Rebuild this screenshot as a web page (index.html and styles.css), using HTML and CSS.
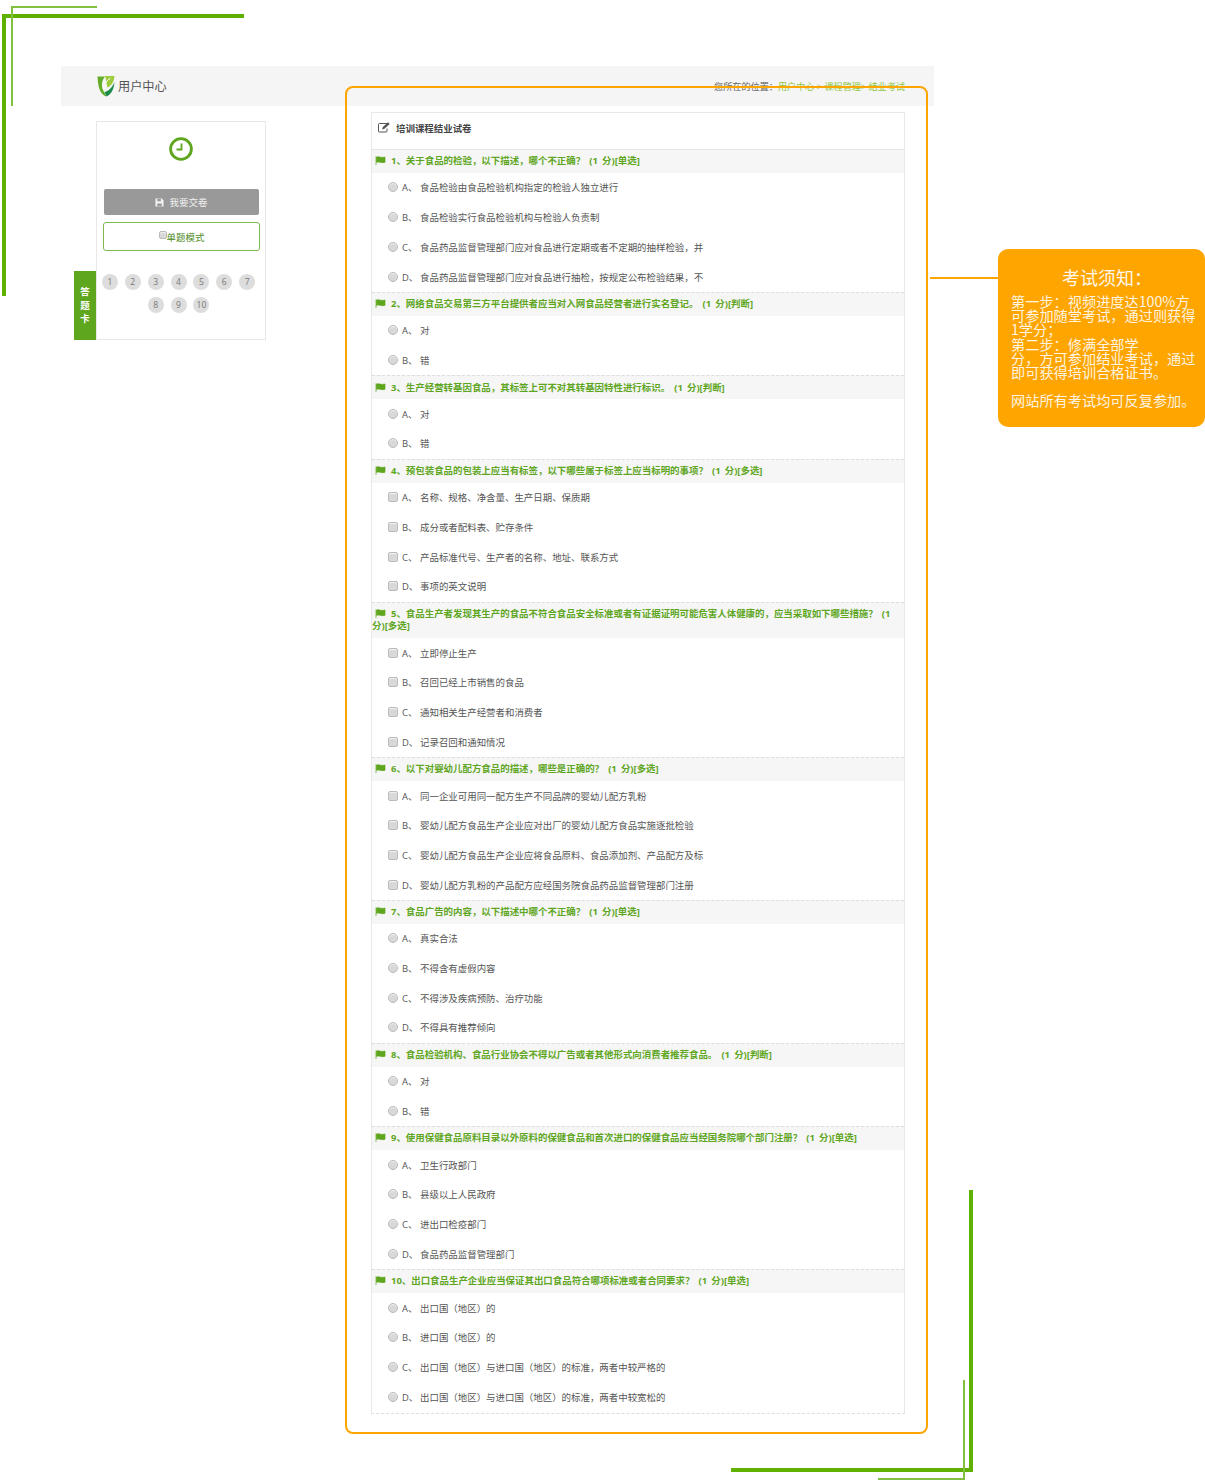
FILE: index.html
```html
<!DOCTYPE html>
<html lang="zh-CN">
<head>
<meta charset="utf-8">
<title>用户中心</title>
<link rel="stylesheet" href="styles.css">
</head>
<body>
<svg width="0" height="0" class="defs"><defs>
<symbol id="flag" viewBox="0 0 12 10"><path d="M1 0.5V10M1.6 1.2C4 0 6 2.6 11 1.2V7C7 8.4 4.500 5.800 1.600 7Z" fill="#5fa61f" stroke="#5fa61f" stroke-width="0.8"/></symbol>
</defs></svg>
<div class="corner tl-thick"></div>
<div class="corner tl-thin"></div>
<div class="corner br-thick"></div>
<div class="corner br-thin"></div>
<div class="frame"></div>
<div class="connector"></div>
<aside class="notice">
  <h2>考试须知&#xFF1A;</h2>
  <p>第一步&#xFF1A;视频进度达100%方<br>可参加随堂考试&#xFF0C;通过则获得<br>1学分&#xFF1B;<br>第二步&#xFF1A;修满全部学<br>分&#xFF0C;方可参加结业考试&#xFF0C;通过<br>即可获得培训合格证书。<br><br>网站所有考试均可反复参加。</p>
</aside>
<div class="page">
  <header class="topbar">
    <div class="brand">
      <svg class="logo" viewBox="0 0 18 22"><path d="M0.500 1.500H8C5 5 4 10 6 15L9.500 21.500C4 20 1 14 0.500 1.500Z" fill="#63ad2a"/><path d="M8 1H17.500C17 6 15 10.500 10.500 12.500C9 8 9.500 4.500 8 1Z" fill="#9ccb3b"/><path d="M17.500 7C17 14 14.500 19 9.500 21.500L7.500 17C11 16.500 15 13 17.500 7Z" fill="#1b8a4b"/><path d="M6.500 14C7 9.500 9.500 5.500 13.500 3" fill="none" stroke="#fff" stroke-width="1"/></svg>
      <span class="brand-name">用户中心</span>
    </div>
    <nav class="crumbs">您所在的位置&#xFF1A;<a>用户中心 &gt; 课程管理&gt; 结业考试</a></nav>
  </header>
  <main class="content">
    <aside class="card">
      <div class="tab"><span>答</span><span>题</span><span>卡</span></div>
      <svg class="clock" viewBox="0 0 24 24"><circle cx="12" cy="12" r="10.400" fill="#fff" stroke="#5fa61f" stroke-width="2.800"/><path d="M12.500 6.500V12.500H7.500" fill="none" stroke="#5fa61f" stroke-width="1.800"/></svg>
      <button class="submit"><svg class="save" viewBox="0 0 10 10"><path d="M0.500 0.500H7.500L9.500 2.500V9.500H0.500Z" fill="#f2f2f2"/><path d="M2.500 0.800H6.500V3.500H2.500ZM2.500 6H7.500V9.200H2.500Z" fill="#999"/></svg>我要交卷</button>
      <label class="mode"><span class="box mode-box"></span>单题模式</label>
      <div class="numbers">
        <span class="num">1</span><span class="num">2</span><span class="num">3</span><span class="num">4</span><span class="num">5</span><span class="num">6</span><span class="num">7</span><span class="num">8</span><span class="num">9</span><span class="num">10</span>
      </div>
    </aside>
    <section class="paper">
      <h1 class="paper-title"><svg class="edit" viewBox="0 0 12 11"><path d="M9 1.500H1.500A1 1 0 0 0 .5 2.500V9A1 1 0 0 0 1.500 10H8A1 1 0 0 0 9 9V6.500" fill="none" stroke="#555" stroke-width="1"/><path d="M4 7.500L4.800 5 10 .3 11.700 2 6.500 6.700Z" fill="#555"/></svg>培训课程结业试卷</h1>

      <div class="q first"><svg class="flag"><use href="#flag"/></svg>1、关于食品的检验&#xFF0C;以下描述&#xFF0C;哪个不正确&#xFF1F; (1 分)[单选]</div>
      <div class="opt"><span class="radio"></span><span class="k">A、</span>食品检验由食品检验机构指定的检验人独立进行</div>
      <div class="opt"><span class="radio"></span><span class="k">B、</span>食品检验实行食品检验机构与检验人负责制</div>
      <div class="opt"><span class="radio"></span><span class="k">C、</span>食品药品监督管理部门应对食品进行定期或者不定期的抽样检验&#xFF0C;并</div>
      <div class="opt"><span class="radio"></span><span class="k">D、</span>食品药品监督管理部门应对食品进行抽检&#xFF0C;按规定公布检验结果&#xFF0C;不</div>

      <div class="q"><svg class="flag"><use href="#flag"/></svg>2、网络食品交易第三方平台提供者应当对入网食品经营者进行实名登记。 (1 分)[判断]</div>
      <div class="opt"><span class="radio"></span><span class="k">A、</span>对</div>
      <div class="opt"><span class="radio"></span><span class="k">B、</span>错</div>

      <div class="q"><svg class="flag"><use href="#flag"/></svg>3、生产经营转基因食品&#xFF0C;其标签上可不对其转基因特性进行标识。 (1 分)[判断]</div>
      <div class="opt"><span class="radio"></span><span class="k">A、</span>对</div>
      <div class="opt"><span class="radio"></span><span class="k">B、</span>错</div>

      <div class="q"><svg class="flag"><use href="#flag"/></svg>4、预包装食品的包装上应当有标签&#xFF0C;以下哪些属于标签上应当标明的事项&#xFF1F; (1 分)[多选]</div>
      <div class="opt"><span class="box"></span><span class="k">A、</span>名称、规格、净含量、生产日期、保质期</div>
      <div class="opt"><span class="box"></span><span class="k">B、</span>成分或者配料表、贮存条件</div>
      <div class="opt"><span class="box"></span><span class="k">C、</span>产品标准代号、生产者的名称、地址、联系方式</div>
      <div class="opt"><span class="box"></span><span class="k">D、</span>事项的英文说明</div>

      <div class="q"><svg class="flag"><use href="#flag"/></svg>5、食品生产者发现其生产的食品不符合食品安全标准或者有证据证明可能危害人体健康的&#xFF0C;应当采取如下哪些措施&#xFF1F; (1 分)[多选]</div>
      <div class="opt"><span class="box"></span><span class="k">A、</span>立即停止生产</div>
      <div class="opt"><span class="box"></span><span class="k">B、</span>召回已经上市销售的食品</div>
      <div class="opt"><span class="box"></span><span class="k">C、</span>通知相关生产经营者和消费者</div>
      <div class="opt"><span class="box"></span><span class="k">D、</span>记录召回和通知情况</div>

      <div class="q"><svg class="flag"><use href="#flag"/></svg>6、以下对婴幼儿配方食品的描述&#xFF0C;哪些是正确的&#xFF1F; (1 分)[多选]</div>
      <div class="opt"><span class="box"></span><span class="k">A、</span>同一企业可用同一配方生产不同品牌的婴幼儿配方乳粉</div>
      <div class="opt"><span class="box"></span><span class="k">B、</span>婴幼儿配方食品生产企业应对出厂的婴幼儿配方食品实施逐批检验</div>
      <div class="opt"><span class="box"></span><span class="k">C、</span>婴幼儿配方食品生产企业应将食品原料、食品添加剂、产品配方及标</div>
      <div class="opt"><span class="box"></span><span class="k">D、</span>婴幼儿配方乳粉的产品配方应经国务院食品药品监督管理部门注册</div>

      <div class="q"><svg class="flag"><use href="#flag"/></svg>7、食品广告的内容&#xFF0C;以下描述中哪个不正确&#xFF1F; (1 分)[单选]</div>
      <div class="opt"><span class="radio"></span><span class="k">A、</span>真实合法</div>
      <div class="opt"><span class="radio"></span><span class="k">B、</span>不得含有虚假内容</div>
      <div class="opt"><span class="radio"></span><span class="k">C、</span>不得涉及疾病预防、治疗功能</div>
      <div class="opt"><span class="radio"></span><span class="k">D、</span>不得具有推荐倾向</div>

      <div class="q"><svg class="flag"><use href="#flag"/></svg>8、食品检验机构、食品行业协会不得以广告或者其他形式向消费者推荐食品。 (1 分)[判断]</div>
      <div class="opt"><span class="radio"></span><span class="k">A、</span>对</div>
      <div class="opt"><span class="radio"></span><span class="k">B、</span>错</div>

      <div class="q"><svg class="flag"><use href="#flag"/></svg>9、使用保健食品原料目录以外原料的保健食品和首次进口的保健食品应当经国务院哪个部门注册&#xFF1F; (1 分)[单选]</div>
      <div class="opt"><span class="radio"></span><span class="k">A、</span>卫生行政部门</div>
      <div class="opt"><span class="radio"></span><span class="k">B、</span>县级以上人民政府</div>
      <div class="opt"><span class="radio"></span><span class="k">C、</span>进出口检疫部门</div>
      <div class="opt"><span class="radio"></span><span class="k">D、</span>食品药品监督管理部门</div>

      <div class="q"><svg class="flag"><use href="#flag"/></svg>10、出口食品生产企业应当保证其出口食品符合哪项标准或者合同要求&#xFF1F; (1 分)[单选]</div>
      <div class="opt"><span class="radio"></span><span class="k">A、</span>出口国&#xFF08;地区&#xFF09;的</div>
      <div class="opt"><span class="radio"></span><span class="k">B、</span>进口国&#xFF08;地区&#xFF09;的</div>
      <div class="opt"><span class="radio"></span><span class="k">C、</span>出口国&#xFF08;地区&#xFF09;与进口国&#xFF08;地区&#xFF09;的标准&#xFF0C;两者中较严格的</div>
      <div class="opt"><span class="radio"></span><span class="k">D、</span>出口国&#xFF08;地区&#xFF09;与进口国&#xFF08;地区&#xFF09;的标准&#xFF0C;两者中较宽松的</div>
    </section>
  </main>
</div>
</body>
</html>
```
FILE: styles.css
```css
* { box-sizing: border-box; }
html, body { margin: 0; padding: 0; }
body {
  position: relative;
  width: 1205px;
  height: 1484px;
  overflow: hidden;
  background: #fff;
  font-family: "Open Sans", "Noto Sans CJK SC", sans-serif;
  font-size: 9.45px;
  color: #555;
}
.defs { position: absolute; }

/* decorative frames */
.corner { position: absolute; pointer-events: none; }
.tl-thick { left: 2px; top: 14px; width: 242px; height: 282px; border-left: 4px solid #5fb000; border-top: 4px solid #5fb000; }
.tl-thin { left: 11px; top: 6px; width: 86px; height: 100px; border-left: 2px solid #82c13f; border-top: 2px solid #82c13f; }
.br-thick { left: 731px; top: 1190px; width: 242px; height: 282px; border-right: 4px solid #5fb000; border-bottom: 4px solid #5fb000; }
.br-thin { left: 878px; top: 1380px; width: 87px; height: 100px; border-right: 2px solid #82c13f; border-bottom: 2px solid #82c13f; }
.frame { position: absolute; z-index: 2; left: 345px; top: 86px; width: 583px; height: 1348px; border: 2px solid #ffa500; border-radius: 8px; pointer-events: none; }
.connector { position: absolute; left: 930px; top: 277px; width: 68px; height: 2px; background: #ffa500; }

/* notice */
.notice { position: absolute; left: 998px; top: 249px; width: 207px; height: 178px; padding: 16px 8px 0 13px; background: #ffa500; border-radius: 10px; color: #fff; font-family: "Noto Sans CJK SC", sans-serif; }
.notice h2 { margin: 0 0 5px; padding-left: 6px; font-size: 18px; line-height: 24px; font-weight: 400; text-align: center; opacity: .92; }
.notice p { margin: 0; font-size: 14.2px; line-height: 14.2px; opacity: .88; white-space: nowrap; }

/* page */
.page { width: 873px; margin-left: 61px; padding-top: 66px; }
.topbar { display: flex; align-items: center; justify-content: space-between; height: 40px; padding: 0 29px 0 36px; background: #f5f5f5; }
.brand { display: flex; align-items: center; gap: 3px; }
.logo { width: 18px; height: 22px; }
.brand-name { font-family: "Noto Sans CJK SC", sans-serif; font-size: 12.2px; color: #555; }
.crumbs { font-size: 9.15px; color: #666; }
.crumbs a { color: #8cc63f; }

.content { display: flex; align-items: flex-start; }

/* side card */
.card { position: relative; flex: none; width: 170px; height: 219px; margin: 15px 0 0 35px; padding: 15px 6px 0; border: 1px solid #e8e8e8; display: flex; flex-direction: column; align-items: center; }
.tab { position: absolute; left: -23px; top: 149px; width: 22px; height: 69px; padding-top: 15px; background: #5fa61f; color: #fff; font-weight: 700; display: flex; flex-direction: column; align-items: center; gap: 1px; line-height: 12.6px; }
.clock { display: block; width: 24px; height: 24px; flex: none; }
.submit { width: 155px; height: 26px; margin-top: 28px; padding: 0; border: 0; border-radius: 2px; background: #999; color: #f2f2f2; font: inherit; display: flex; align-items: center; justify-content: center; gap: 6px; }
.save { width: 9px; height: 9px; }
.mode { align-self: stretch; width: 157px; height: 29px; margin: 7px 0 0; border: 1px solid #7dbb4f; border-radius: 3px; color: #4d8a1c; display: flex; align-items: center; justify-content: center; }
.numbers { align-self: center; width: 161px; margin: 23px 0 0 -5px; display: flex; flex-wrap: wrap; justify-content: center; gap: 7px 6.900px; }
.num { width: 16px; height: 16px; border-radius: 50%; background: #ddd; color: #777; font-size: 8.500px; line-height: 16px; text-align: center; }

/* paper */
.paper { flex: none; width: 534px; margin: 6px 0 0 105px; border: 1px solid #e8e8e8; border-bottom: 1px dashed #ddd; padding-bottom: 1px; }
.paper-title { display: flex; align-items: center; height: 36px; margin: 0; padding: 0 0 7px 6px; font-size: 9.45px; font-weight: 700; color: #444; gap: 6px; }
.edit { width: 12px; height: 11px; }
.q { padding: 5.25px 0; line-height: 12.6px; word-spacing: 1.7px; background: #f6f6f6; color: #5fa61f; font-weight: 700; border-top: 1px dashed #ddd; }
.q.first { border-top: 1px solid #e5e5e5; }
.flag { width: 11px; height: 9px; margin: 0 5px 0 3px; vertical-align: -1px; }
.opt { display: flex; align-items: center; height: 29.7px; padding: 0 0 1px 16px; white-space: nowrap; }
.k { width: 18px; flex: none; margin-left: 4px; }
.radio, .box { flex: none; display: block; width: 10px; height: 10px; border: 1px solid #bbb; background: #d8d8d8; box-shadow: inset 0 1px 1px #f2f2f2; }
.radio { border-radius: 50%; }
.box { border-radius: 2px; }
.mode-box { width: 8px; height: 8px; margin-top: -3px; }
```
